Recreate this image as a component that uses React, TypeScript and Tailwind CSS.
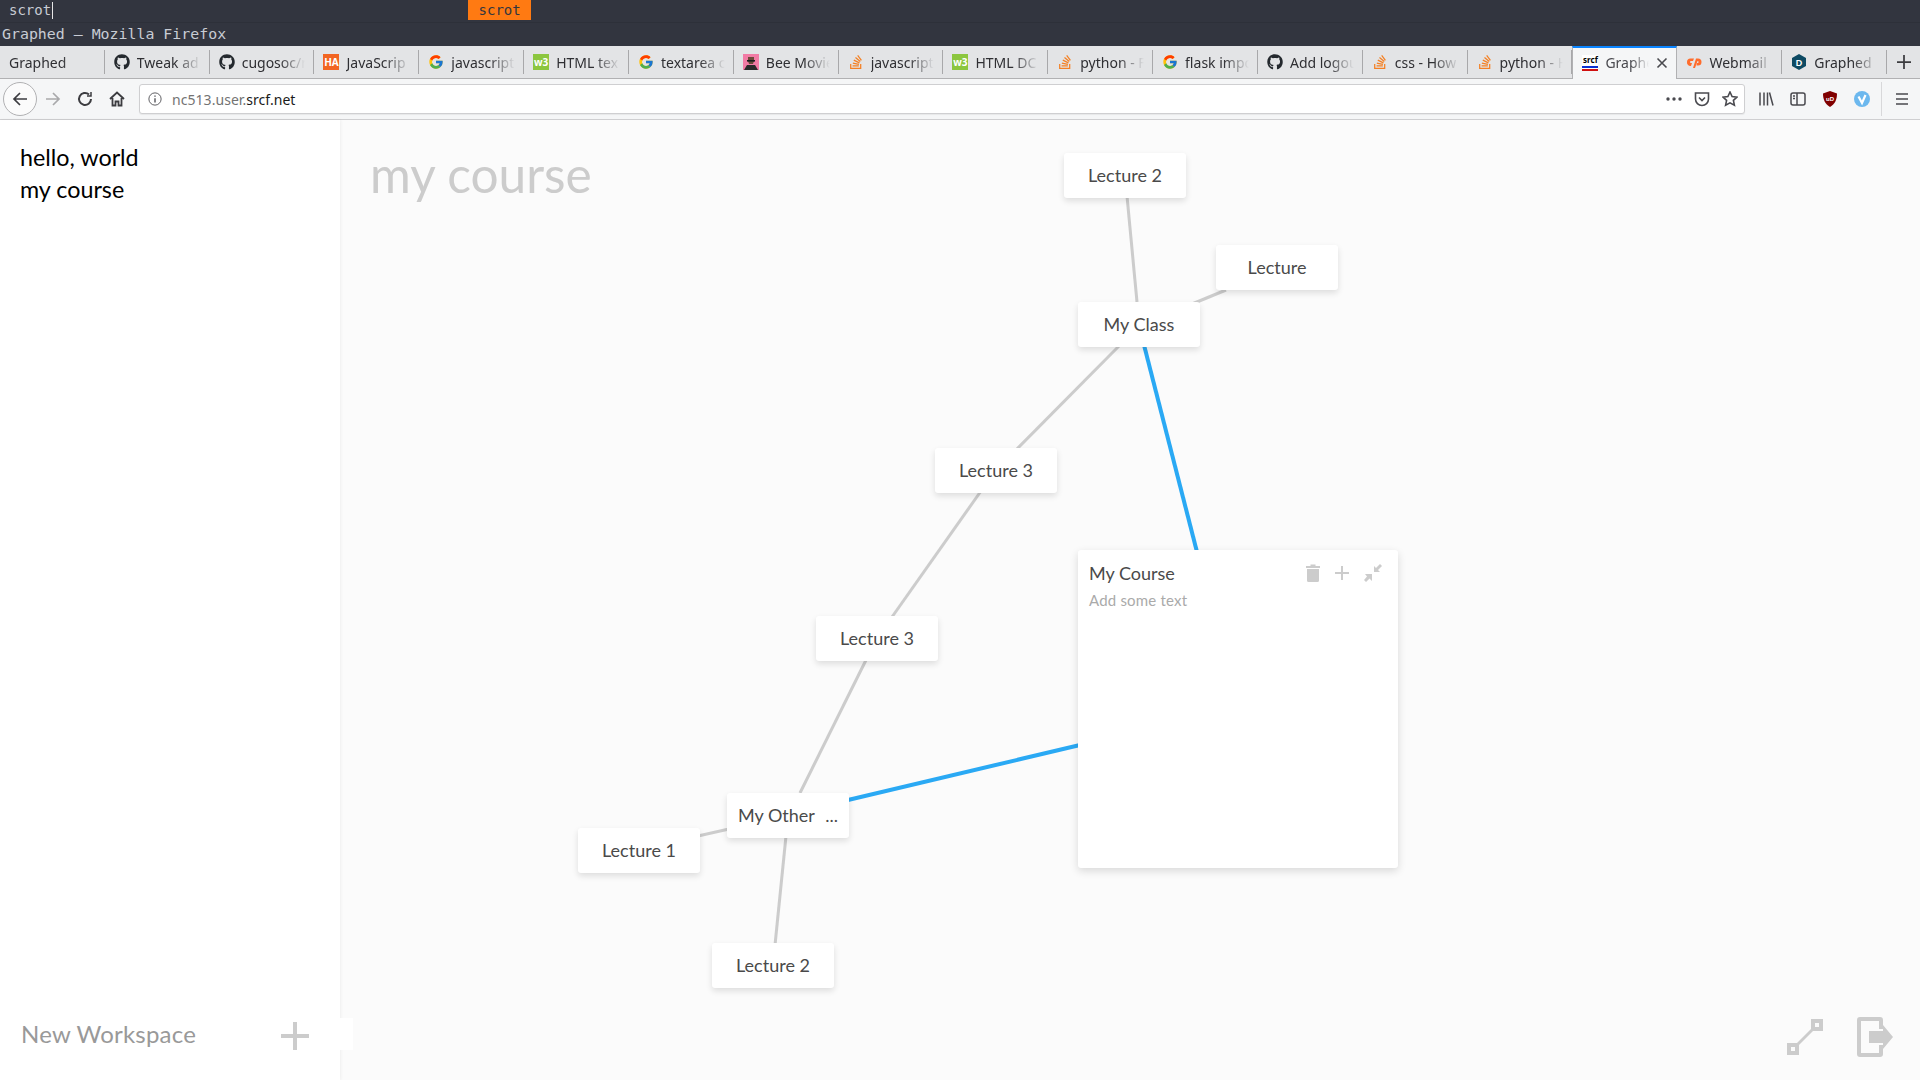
import React from 'react';
import { FaGithub, FaStackOverflow } from 'react-icons/fa';
import { FcGoogle } from 'react-icons/fc';

const ui = 'font-["Noto_Sans","Open_Sans",sans-serif]';

// favicons that the icon packages don't have
const Html5Up = () => (
  <span className="flex h-4 w-4 items-center justify-center bg-[#8cc63f] text-[10px] leading-none font-bold text-white">w3</span>
);
const HackerRankish = () => (
  <span className="flex h-4 w-4 items-center justify-center bg-[#f26522] text-[10px] leading-none font-bold text-white">HA</span>
);
const BeeMovie = () => (
  <svg viewBox="0 0 16 16" className="h-4 w-4">
    <rect width="16" height="16" fill="#f27ba5" />
    <path d="M5 3h6v4l-1 3h-4l-1-3z" fill="#6b4a3a" />
    <path d="M4 6h8v1.6H4z" fill="#1c1c1c" />
    <path d="M1 16l3-5h8l3 5z" fill="#2a2a2a" />
  </svg>
);
const Srcf = () => (
  <span className="flex h-4 w-4 flex-col bg-white text-center text-[8px] leading-[10px] font-bold text-black">
    <span className="h-[10px]">srcf</span>
    <span className="mt-px h-[2px] bg-[#0a2fd0]" />
    <span className="mt-px h-[2px] bg-[#d01010]" />
  </span>
);
const Cpanel = () => (
  <svg viewBox="0 0 16 16" className="h-4 w-4">
    <path d="M1 8a3.500 3.500 0 0 1 3.500-3.500H8L7 7H5a1 1 0 0 0 0 2h1l-1 3H4.500A3.500 3.500 0 0 1 1 8z" fill="#ff6c2c" />
    <path d="M7 14l3-9.500h2a3.500 3.500 0 0 1 0 7h-1.500L11 9h.6a1 1 0 0 0 0-2H11.500L9 14z" fill="#ff6c2c" />
  </svg>
);
const DHex = () => (
  <svg viewBox="0 0 16 16" className="h-4 w-4">
    <path d="M8 0l7 4v8l-7 4-7-4V4z" fill="#0d4a63" />
    <text x="8" y="11.500" textAnchor="middle" fontSize="9" fontWeight="700" fill="#fff" fontFamily="Liberation Sans, sans-serif">D</text>
  </svg>
);

const gh = <FaGithub className="h-4 w-4 text-[#24292e]" />;
const goog = <FcGoogle className="h-4 w-4" />;
const so = <FaStackOverflow className="h-4 w-4 text-[#f48024]" />;

const TABS: { label: string; icon?: React.ReactNode; active?: boolean }[] = [
  { label: 'Graphed' },
  { label: 'Tweak ad', icon: gh },
  { label: 'cugosoc/r', icon: gh },
  { label: 'JavaScrip', icon: <HackerRankish /> },
  { label: 'javascript', icon: goog },
  { label: 'HTML tex', icon: <Html5Up /> },
  { label: 'textarea c', icon: goog },
  { label: 'Bee Movie', icon: <BeeMovie /> },
  { label: 'javascript', icon: so },
  { label: 'HTML DC', icon: <Html5Up /> },
  { label: 'python - F', icon: so },
  { label: 'flask impo', icon: goog },
  { label: 'Add logou', icon: gh },
  { label: 'css - How', icon: so },
  { label: 'python - H', icon: so },
  { label: 'Graphe', icon: <Srcf />, active: true },
  { label: 'Webmail', icon: <Cpanel /> },
  { label: 'Graphed |', icon: <DHex /> },
];

// graph nodes: x, y are the top-left corner on the canvas
const NODES = [
  { label: 'Lecture 2', x: 1064, y: 153 },
  { label: 'Lecture', x: 1216, y: 245 },
  { label: 'My Class', x: 1078, y: 302 },
  { label: 'Lecture 3', x: 935, y: 448 },
  { label: 'Lecture 3', x: 816, y: 616 },
  { label: 'Lecture 1', x: 578, y: 828 },
  { label: 'Lecture 2', x: 712, y: 943 },
];

const EDGES = [
  { d: 'M1127 196L1137 302', blue: false },
  { d: 'M1226 290L1192 304', blue: false },
  { d: 'M1120 345L1016 450', blue: false },
  { d: 'M981 491L892 617', blue: false },
  { d: 'M866 660L800 793', blue: false },
  { d: 'M698 836L729 829', blue: false },
  { d: 'M786 836L775 945', blue: false },
  { d: 'M1144 345L1197 552', blue: true },
  { d: 'M848 800L1080 745', blue: true },
];

const Tab = ({ label, icon, active }: { label: string; icon?: React.ReactNode; active?: boolean }) => (
  <div
    className={
      active
        ? 'relative flex h-[33px] w-[105px] shrink-0 items-center gap-[7px] border-x border-t-2 border-x-[#b1b1b3] border-t-[#0a84ff] bg-[#f5f6f7] pr-2 pb-[2px] pl-[9px]'
        : 'flex h-[32px] w-[104.830px] shrink-0 items-center py-1'
    }
  >
    {active ? (
      <>
        <span className="shrink-0">{icon}</span>
        <span className="min-w-0 flex-1 overflow-hidden text-[14px] whitespace-nowrap text-[#4a4a4f] [mask-image:linear-gradient(to_right,black_60%,transparent)]">{label}</span>
        <svg viewBox="0 0 12 12" className="h-3 w-3 shrink-0 stroke-[#4a4a4f] stroke-[1.6]">
          <path d="M1.500 1.500l9 9M10.500 1.500l-9 9" />
        </svg>
      </>
    ) : (
      <div className="flex h-full w-full items-center gap-[7px] border-r border-[#a8a8aa] pr-2 pl-[9px]">
        {icon && <span className="shrink-0">{icon}</span>}
        <span className="min-w-0 flex-1 overflow-hidden text-[14px] whitespace-nowrap text-[#2f2f33] [mask-image:linear-gradient(to_right,black_60%,transparent)]">{label}</span>
      </div>
    )}
  </div>
);

const Toolbar = () => (
  <div className="flex h-[41px] items-center border-b border-[#cfcfd1] bg-[#f5f6f7] pl-[3px]">
    <div className="flex h-[34px] w-[34px] items-center justify-center rounded-full border border-[#b1b1b3] bg-[#fbfbfb]">
      <svg viewBox="0 0 16 16" className="h-4 w-4 fill-none stroke-[#3c3c40] stroke-[1.700]">
        <path d="M15 8H2M8 2L2 8l6 6" />
      </svg>
    </div>
    <svg viewBox="0 0 16 16" className="ml-2 h-4 w-4 fill-none stroke-[#a9a9ab] stroke-[1.700]">
      <path d="M1 8h13M8 2l6 6-6 6" />
    </svg>
    <svg viewBox="0 0 16 16" className="ml-4 h-4 w-4 fill-none stroke-[#3c3c40] stroke-2">
      <path d="M14 8a6 6 0 1 1-2-4.500" />
      <path d="M14 1v4h-4" strokeWidth="1.500" />
    </svg>
    <svg viewBox="0 0 16 16" className="ml-4 h-4 w-4 fill-none stroke-[#3c3c40] stroke-[1.800]">
      <path d="M1 8l7-6.500L15 8M3.500 7v7.500h3v-4h3v4h3V7" />
    </svg>
    <div className="ml-[14px] flex h-[30px] w-[1606px] items-center rounded-[3px] border border-[#cfcfd1] bg-white pr-[6px] pl-2 shadow-[0_1px_1px_rgba(0,0,0,0.06)]">
      <svg viewBox="0 0 16 16" className="h-[14px] w-[14px] fill-none stroke-[#4a4a4f]">
        <circle cx="8" cy="8" r="7" />
        <path d="M8 7v5M8 4v1.500" strokeWidth="1.500" />
      </svg>
      <span className="ml-[10px] flex-1 text-[14px] tracking-[0.05px] text-[#737373]">
        nc513.user.<span className="text-[#1a1a1a]">srcf.net</span>
      </span>
      <svg viewBox="0 0 16 4" className="h-1 w-4 fill-[#4a4a4f]">
        <circle cx="2" cy="2" r="1.700" />
        <circle cx="8" cy="2" r="1.700" />
        <circle cx="14" cy="2" r="1.700" />
      </svg>
      <svg viewBox="0 0 16 16" className="ml-3 h-4 w-4 fill-none stroke-[#4a4a4f] stroke-[1.600]">
        <path d="M1.500 2h13v6a6.500 6.500 0 0 1-13 0zM5 6.500L8 9.500l3-3" />
      </svg>
      <svg viewBox="0 0 16 16" className="ml-3 h-4 w-4 fill-none stroke-[#4a4a4f] stroke-[1.600]">
        <path d="M8 1l2.100 4.500 4.900.6-3.600 3.300 1 4.800L8 11.800l-4.400 2.400 1-4.800L1 6.100l4.900-.6z" />
      </svg>
    </div>
    <svg viewBox="0 0 16 16" className="ml-[13px] h-4 w-4 fill-none stroke-[#4a4a4f] stroke-[1.500]">
      <path d="M2 1.500v13M6 1.500v13M9.500 1.500v13M11.500 1.500l3.500 13" />
    </svg>
    <svg viewBox="0 0 16 16" className="ml-4 h-4 w-4 fill-none stroke-[#4a4a4f] stroke-[1.500]">
      <rect x="1" y="2" width="14" height="12" rx="2" />
      <path d="M7 2v12M3 5h2M3 7.500h2" />
    </svg>
    <svg viewBox="0 0 16 16" className="ml-4 h-4 w-4">
      <path d="M8 0l7 2.500c0 6-2 10.500-7 13.500C3 13 1 8.500 1 2.500z" fill="#800000" />
      <text x="8" y="10" textAnchor="middle" fontSize="6" fontWeight="700" fill="#fff" fontFamily="Liberation Sans, sans-serif">uD</text>
    </svg>
    <svg viewBox="0 0 16 16" className="ml-4 h-4 w-4">
      <circle cx="8" cy="8" r="8" fill="#6cb8ee" />
      <path d="M4.500 5.500L8 12l3.500-8" fill="none" stroke="#fff" strokeWidth="2.200" />
    </svg>
    <div className="ml-[11px] h-[34px] w-px bg-[#d8d8da]" />
    <svg viewBox="0 0 16 16" className="ml-3 h-4 w-4 fill-none stroke-[#4a4a4f] stroke-[1.700]">
      <path d="M2 3h12M2 8h12M2 13h12" />
    </svg>
  </div>
);

const Node = ({ label, x, y }: { label: string; x: number; y: number }) => (
  <div
    className="absolute flex h-[45px] w-[122px] items-center justify-center rounded-[3px] bg-white text-[18px] text-[#4a4a4a] shadow-[0_3px_6px_rgba(0,0,0,0.12)]"
    style={{ left: x, top: y - 120 }}
  >
    {label}
  </div>
);

export default function App() {
  return (
    <div className="flex h-[1080px] w-[1920px] flex-col overflow-hidden bg-white">
      {/* window manager bars */}
      <div className='h-[46px] bg-[#32353f] font-["DejaVu_Sans_Mono",monospace] text-[#c8ccd4]'>
        <div className="flex h-[23px] items-start border-b border-[#2d3039] text-[14px]">
          <span className="flex h-[20px] items-center pl-[9px]">
            scrot<span className="ml-px h-[17px] w-px bg-[#e6e6e6]" />
          </span>
          <span className="ml-[415px] flex h-[20px] w-[63px] items-center justify-center bg-[#ff7a12] text-[#32353f]">scrot</span>
        </div>
        <div className="flex h-[23px] items-center pl-[2px] text-[14.900px] leading-none">Graphed – Mozilla Firefox</div>
      </div>

      {/* browser chrome */}
      <div className={ui}>
        <div className="flex h-[33px] items-start border-b border-[#b1b1b3] bg-[#e3e4e6]">
          {TABS.map((t, i) => (
            <Tab key={i} {...t} />
          ))}
          <div className="flex h-[32px] flex-1 items-center justify-center">
            <svg viewBox="0 0 16 16" className="h-[14px] w-[14px] stroke-[#3c3c40] stroke-2">
              <path d="M8 0v16M0 8h16" />
            </svg>
          </div>
        </div>
        <Toolbar />
      </div>

      {/* page */}
      <div className='flex min-h-0 flex-1 font-["Lato",sans-serif]'>
        <aside className="relative z-10 flex w-[340px] shrink-0 flex-col justify-between bg-white shadow-[1px_0_3px_rgba(0,0,0,0.05)]">
          <div className="pt-[21px] pl-5 text-[23.300px] leading-[32px] text-black">
            <div>hello, world</div>
            <div>my course</div>
          </div>
          <div className="mb-[30px] flex h-[32px] w-[353px] items-center bg-white pl-[21px]">
            <span className="w-[260px] text-[24px] tracking-[0.2px] text-[#999]">New Workspace</span>
            <svg viewBox="0 0 28 28" className="mt-[3px] h-7 w-7 stroke-[#ccc] stroke-[4]">
              <path d="M14 0v28M0 14h28" />
            </svg>
          </div>
        </aside>

        <main className="relative flex-1 bg-[#fbfbfb]">
          <h1 className="absolute top-[24px] left-[30px] text-[49.600px] leading-[60px] text-[#ccc]">my course</h1>

          {/* canvas coordinates are page coordinates, hence the viewBox offset */}
          <svg viewBox="340 120 1580 960" className="absolute inset-0 h-full w-full">
            {EDGES.map((e, i) => (
              <path key={i} d={e.d} fill="none" stroke={e.blue ? '#2aa9f4' : '#ccc'} strokeWidth={e.blue ? 4 : 3} />
            ))}
          </svg>
        </main>
      </div>

      {/* diagram layer, positioned over the page */}
      <div className='absolute top-[120px] left-0 font-["Lato",sans-serif]'>
        {NODES.map((n, i) => (
          <Node key={i} {...n} />
        ))}
        <div
          className="absolute flex h-[45px] w-[122px] items-center justify-between rounded-[3px] bg-white pr-[11px] pl-[11px] text-[18px] text-[#4a4a4a] shadow-[0_3px_6px_rgba(0,0,0,0.12)]"
          style={{ left: 727, top: 673 }}
        >
          <span>My Other</span>
          <span>...</span>
        </div>
        <div
          className="absolute h-[318px] w-[320px] rounded-[3px] bg-white py-[11px] pr-3 pl-[11px] shadow-[0_3px_8px_rgba(0,0,0,0.14)]"
          style={{ left: 1078, top: 430 }}
        >
          <div className="flex items-center justify-between">
            <span className="text-[18px] leading-[24px] text-[#4a4a4a]">My Course</span>
            <div className="mr-1 flex items-center gap-[15px]">
              <svg viewBox="0 0 14 18" className="h-[18px] w-[14px] fill-[#ccc]">
                <path d="M0 2h4.500V.5h5V2H14v2H0zM1 5h12v11.500a1.500 1.500 0 0 1-1.500 1.500h-9A1.500 1.500 0 0 1 1 16.500z" />
              </svg>
              <svg viewBox="0 0 14 14" className="h-[14px] w-[14px] stroke-[#ccc] stroke-2">
                <path d="M7 0v14M0 7h14" />
              </svg>
              <svg viewBox="0 0 18 18" className="h-[18px] w-[18px] fill-[#ccc]">
                <path d="M10 2v6h6l-2-2 4-4-2-2-4 4zM8 10H1l2 2.500-3 3.500 2 2 3.500-3.500L8 17z" />
              </svg>
            </div>
          </div>
          <div className="mt-1 text-[15px] tracking-[0.2px] text-[#aaa]">Add some text</div>
        </div>

        {/* footer actions */}
        <svg viewBox="0 0 36 36" className="absolute h-9 w-9 fill-[#ccc]" style={{ left: 1787, top: 899 }}>
          <path fillRule="evenodd" d="M24 0h12v12H24zM28 4v4h4V4zM0 24h12v12H0zM4 28v4h4v-4z" />
          <path d="M9 25l16-16 2 2-16 16z" />
        </svg>
        <svg viewBox="0 0 36 40" className="absolute h-10 w-9 fill-[#ccc]" style={{ left: 1857, top: 897 }}>
          <path d="M3 0h20a3 3 0 0 1 3 3v9h-4V4H4v32h18v-8h4v9a3 3 0 0 1-3 3H3a3 3 0 0 1-3-3V3a3 3 0 0 1 3-3z" />
          <path d="M12 14h14V8l10 12-10 12v-6H12z" />
        </svg>
      </div>
    </div>
  );
}
